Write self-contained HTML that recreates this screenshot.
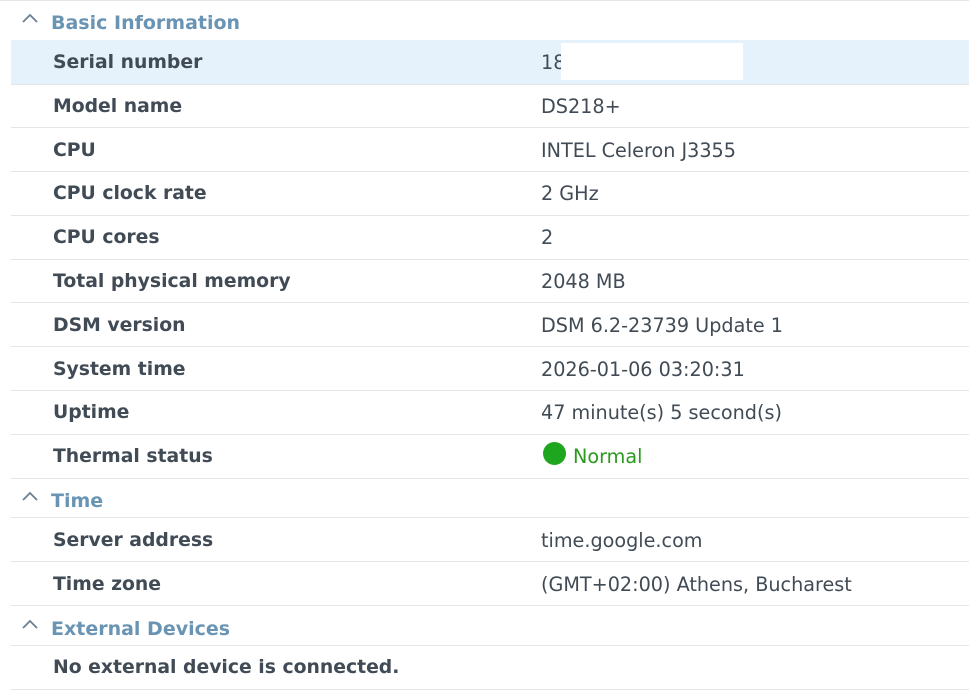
<!DOCTYPE html>
<html><head><meta charset="utf-8">
<style>
html,body{margin:0;padding:0;background:#fff;width:969px;height:700px;overflow:hidden;position:relative;font-family:"DejaVu Sans","Liberation Sans",sans-serif;}
.line{position:absolute;left:11px;right:0;height:1px;background:#e3e5e8;}
.hl{position:absolute;left:11px;right:0;top:40px;height:44px;background:#e5f2fc;}
.lab{position:absolute;left:53px;font-weight:bold;font-size:18.8px;color:#414b55;white-space:nowrap;margin-top:1px;}
.val{position:absolute;left:541px;font-size:19.2px;color:#414b55;white-space:nowrap;margin-top:0px;}
.sec{position:absolute;left:51px;font-weight:bold;font-size:19px;color:#6a94b4;white-space:nowrap;margin-top:1px;}
.car{position:absolute;left:21px;width:18px;height:11px;}
</style></head><body>
<div class="line" style="top:0;left:0;"></div>
<div class="hl"></div>
<div style="position:absolute;left:561px;top:43px;width:182px;height:37px;background:#fff;"></div>

<svg class="car" style="top:13px" viewBox="0 0 18 11"><path d="M2 9 L9 2 L16 9" fill="none" stroke="#6a8092" stroke-width="1.8"/></svg>
<div class="sec" style="top:11px">Basic Information</div>

<div class="lab" style="top:51px">Serial number</div>
<div class="val" style="top:51px">1<span style="display:inline-block;width:8px;overflow:hidden;vertical-align:top">8</span></div>
<div class="line" style="top:84px"></div>
<div class="lab" style="top:95px">Model name</div><div class="val" style="top:95px">DS218+</div>
<div class="line" style="top:127px"></div>
<div class="lab" style="top:139px">CPU</div><div class="val" style="top:139px">INTEL Celeron J3355</div>
<div class="line" style="top:171px"></div>
<div class="lab" style="top:182px">CPU clock rate</div><div class="val" style="top:182px">2 GHz</div>
<div class="line" style="top:215px"></div>
<div class="lab" style="top:226px">CPU cores</div><div class="val" style="top:226px">2</div>
<div class="line" style="top:259px"></div>
<div class="lab" style="top:270px">Total physical memory</div><div class="val" style="top:270px">2048 MB</div>
<div class="line" style="top:302px"></div>
<div class="lab" style="top:314px">DSM version</div><div class="val" style="top:314px">DSM 6.2-23739 Update 1</div>
<div class="line" style="top:346px"></div>
<div class="lab" style="top:358px">System time</div><div class="val" style="top:358px">2026-01-06 03:20:31</div>
<div class="line" style="top:390px"></div>
<div class="lab" style="top:401px">Uptime</div><div class="val" style="top:401px">47 minute(s) 5 second(s)</div>
<div class="line" style="top:434px"></div>
<div class="lab" style="top:445px">Thermal status</div>
<div style="position:absolute;left:543px;top:442px;width:23px;height:23px;border-radius:50%;background:#1ea61e;"></div>
<div class="val" style="top:445px;left:573px;color:#2a9a1e">Normal</div>
<div class="line" style="top:478px"></div>

<svg class="car" style="top:491px" viewBox="0 0 18 11"><path d="M2 9 L9 2 L16 9" fill="none" stroke="#6a8092" stroke-width="1.8"/></svg>
<div class="sec" style="top:489px">Time</div>
<div class="line" style="top:517px"></div>
<div class="lab" style="top:529px">Server address</div><div class="val" style="top:529px">time.google.com</div>
<div class="line" style="top:561px"></div>
<div class="lab" style="top:573px">Time zone</div><div class="val" style="top:573px">(GMT+02:00) Athens, Bucharest</div>
<div class="line" style="top:605px"></div>

<svg class="car" style="top:619px" viewBox="0 0 18 11"><path d="M2 9 L9 2 L16 9" fill="none" stroke="#6a8092" stroke-width="1.8"/></svg>
<div class="sec" style="top:617px">External Devices</div>
<div class="line" style="top:645px"></div>
<div class="lab" style="top:656px">No external device is connected.</div>
<div class="line" style="top:689px"></div>
</body></html>
